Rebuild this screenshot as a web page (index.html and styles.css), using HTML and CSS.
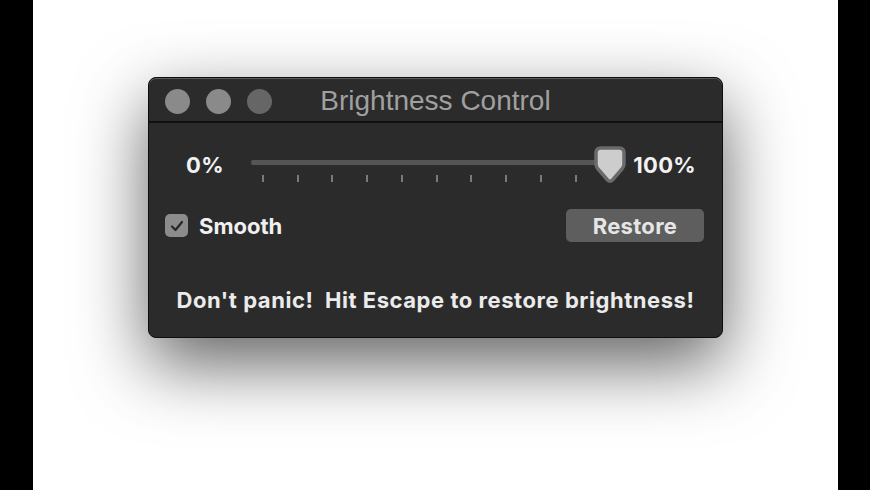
FILE: index.html
```html
<!DOCTYPE html>
<html lang="en">
<head>
    <meta charset="UTF-8">
    <meta name="viewport" content="width=device-width, initial-scale=1.0">
    <title>Brightness Control</title>
    <link rel="stylesheet" href="styles.css">
</head>
<body>
    <div class="bar"></div>
    <main class="stage">
        <div class="window">
            <div class="titlebar">
                <div class="lights">
                    <span class="light"></span>
                    <span class="light"></span>
                    <span class="light dim"></span>
                </div>
                <div class="title">Brightness Control</div>
                <div></div>
            </div>
            <div class="content">
                <div class="slider-row">
                    <span class="pct">0%</span>
                    <div class="slider">
                        <div class="track"></div>
                        <div class="ticks">
                            <i></i><i></i><i></i><i></i><i></i><i></i><i></i><i></i><i></i><i></i><i></i>
                        </div>
                        <svg class="knob" width="32" height="38" viewBox="0 0 32 38">
                            <path d="M7 2 H25 Q30 2 30 7 V18 Q30 21 28 23 L18.5 34 Q16 36.5 13.5 34 L4 23 Q2 21 2 18 V7 Q2 2 7 2 Z" fill="#cdcdcd" stroke="#6a6a6a" stroke-width="3.5"/>
                        </svg>
                    </div>
                    <span class="pct">100%</span>
                </div>
                <div class="options-row">
                    <label class="check">
                        <span class="box">
                            <svg width="14" height="12" viewBox="0 0 14 12"><path d="M2 6.5 L5.5 10 L12 2" fill="none" stroke="#262626" stroke-width="2.2" stroke-linecap="round" stroke-linejoin="round"/></svg>
                        </span>
                        Smooth
                    </label>
                    <button class="restore">Restore</button>
                </div>
                <p class="message">Don't panic!&nbsp; Hit Escape to restore brightness!</p>
            </div>
        </div>
    </main>
    <div class="bar"></div>
</body>
</html>
```
FILE: styles.css
```css
html, body {
    height: 100%;
}
body {
    margin: 0;
    display: flex;
    font-family: Inter, "Liberation Sans", Arial, sans-serif;
    background-color: #000;
    overflow: hidden;
}
.bar {
    width: 33px;
    background-color: #000;
}
.bar:last-child {
    width: 32px;
}
.stage {
    flex: 1;
    background-color: #fff;
    display: flex;
    justify-content: center;
    padding-top: 77px;
}
.window {
    width: 573px;
    height: 259px;
    background-color: #2b2b2b;
    border: 1px solid #0e0e0e;
    border-radius: 8px;
    box-shadow: inset 0 1px 0 #5a5a5a, 0 26px 70px rgba(0, 0, 0, 0.62);
    display: flex;
    flex-direction: column;
}
.titlebar {
    height: 42px;
    padding-top: 1px;
    border-bottom: 2px solid #111;
    display: grid;
    grid-template-columns: 1fr auto 1fr;
    align-items: center;
}
.lights {
    display: flex;
    gap: 16px;
    padding-left: 16px;
    padding-top: 2px;
}
.light {
    width: 25px;
    height: 25px;
    border-radius: 50%;
    background-color: #8a8a8a;
}
.light.dim {
    background-color: #666;
}
.title {
    color: #a0a0a0;
    font-size: 28px;
    font-family: "Liberation Sans", Arial, sans-serif;
    padding-top: 2px;
}
.content {
    flex: 1;
    display: flex;
    flex-direction: column;
}
.slider-row {
    display: flex;
    align-items: center;
    padding: 22px 26px 0 37px;
    height: 40px;
}
.pct {
    color: #f2f2f2;
    font-size: 22px;
    font-weight: bold;
    letter-spacing: 0.3px;
}
.slider {
    flex: 1;
    position: relative;
    height: 40px;
    margin: 0 7px 0 27px;
}
.track {
    margin-top: 15px;
    height: 5px;
    background-color: #555;
    border-radius: 2px;
    margin-right: 20px;
}
.ticks {
    display: flex;
    justify-content: space-between;
    padding: 10px 15px 0 11px;
}
.ticks i {
    width: 2px;
    height: 7px;
    background-color: #7a7a7a;
}
.knob {
    position: absolute;
    right: 0;
    top: 1px;
}
.options-row {
    display: flex;
    justify-content: space-between;
    align-items: center;
    padding: 24px 18px 0 16px;
}
.check {
    display: flex;
    align-items: center;
    gap: 11px;
    color: #f0f0f0;
    font-size: 22px;
    font-weight: bold;
}
.box {
    width: 23px;
    height: 23px;
    border-radius: 5px;
    background-color: #8c8c8c;
    display: flex;
    align-items: center;
    justify-content: center;
}
.restore {
    width: 138px;
    height: 33px;
    border: none;
    border-radius: 5px;
    background-color: #5e5e5e;
    color: #e6e6e6;
    font-family: inherit;
    font-size: 22px;
    font-weight: bold;
    letter-spacing: 0.3px;
}
.message {
    margin: 45px 0 0;
    text-align: center;
    color: #ebebeb;
    font-size: 22px;
    font-weight: bold;
    letter-spacing: 0.55px;
}
```
